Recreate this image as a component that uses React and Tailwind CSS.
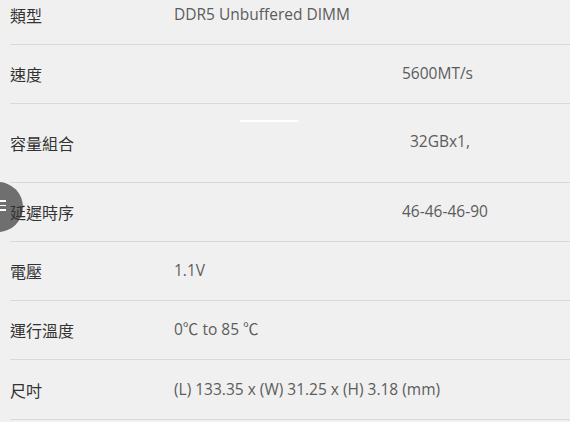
import React from 'react';

const rows = [
    { label: '類型', value: 'DDR5 Unbuffered DIMM', pad: 'pl-0', h: 'h-[60px]' },
    { label: '速度', value: '5600MT/s', pad: 'pl-[228px]', h: 'h-[59px]' },
    { label: '容量組合', value: '32GBx1,', pad: 'pl-[236px]', h: 'h-[79px]', line: true },
    { label: '延遲時序', value: '46-46-46-90', pad: 'pl-[228px]', h: 'h-[59px]' },
    { label: '電壓', value: '1.1V', pad: 'pl-0', h: 'h-[59px]' },
    { label: '運行溫度', value: '0℃ to 85 ℃', pad: 'pl-0', h: 'h-[59px]' },
    { label: '尺吋', value: '(L) 133.35 x (W) 31.25 x (H) 3.18 (mm)', pad: 'pl-0', h: 'h-[60px]' },
];

const App = () => {
    return (
        <div className="relative w-[570px] h-[422px] overflow-hidden bg-[#f0f0f0] font-['Open_Sans','Noto_Sans_CJK_TC',sans-serif]">
            {/* floating menu button on the left edge */}
            <div className="absolute left-[-27px] top-[182px] w-[50px] h-[50px] rounded-full bg-[#6f6f6f]">
                <div className="absolute left-[27px] top-[18px] flex flex-col gap-[3px]">
                    <span className="block w-[6px] h-[1.5px] bg-white" />
                    <span className="block w-[6px] h-[1.5px] bg-white" />
                    <span className="block w-[6px] h-[1.5px] bg-white" />
                </div>
            </div>

            <div className="relative ml-[10px] -mt-[15px]">
                {rows.map((row, i) => (
                    <div key={i} className={`flex items-center border-b border-[#d9d9d9] ${row.h}`}>
                        <div className="w-[164px] shrink-0 text-[16px] text-[#333] font-['Noto_Sans_CJK_TC',sans-serif]">
                            {row.label}
                        </div>
                        <div className={`flex flex-col ${row.line ? '-mt-[12px]' : ''}`}>
                            {row.line && (
                                <div className="ml-[66px] mb-[8px] w-[58px] h-[2px] bg-white" />
                            )}
                            <div className={`text-[15.5px] text-[#5c5c5c] ${row.pad}`}>{row.value}</div>
                        </div>
                    </div>
                ))}
            </div>
        </div>
    );
};

export default App;
